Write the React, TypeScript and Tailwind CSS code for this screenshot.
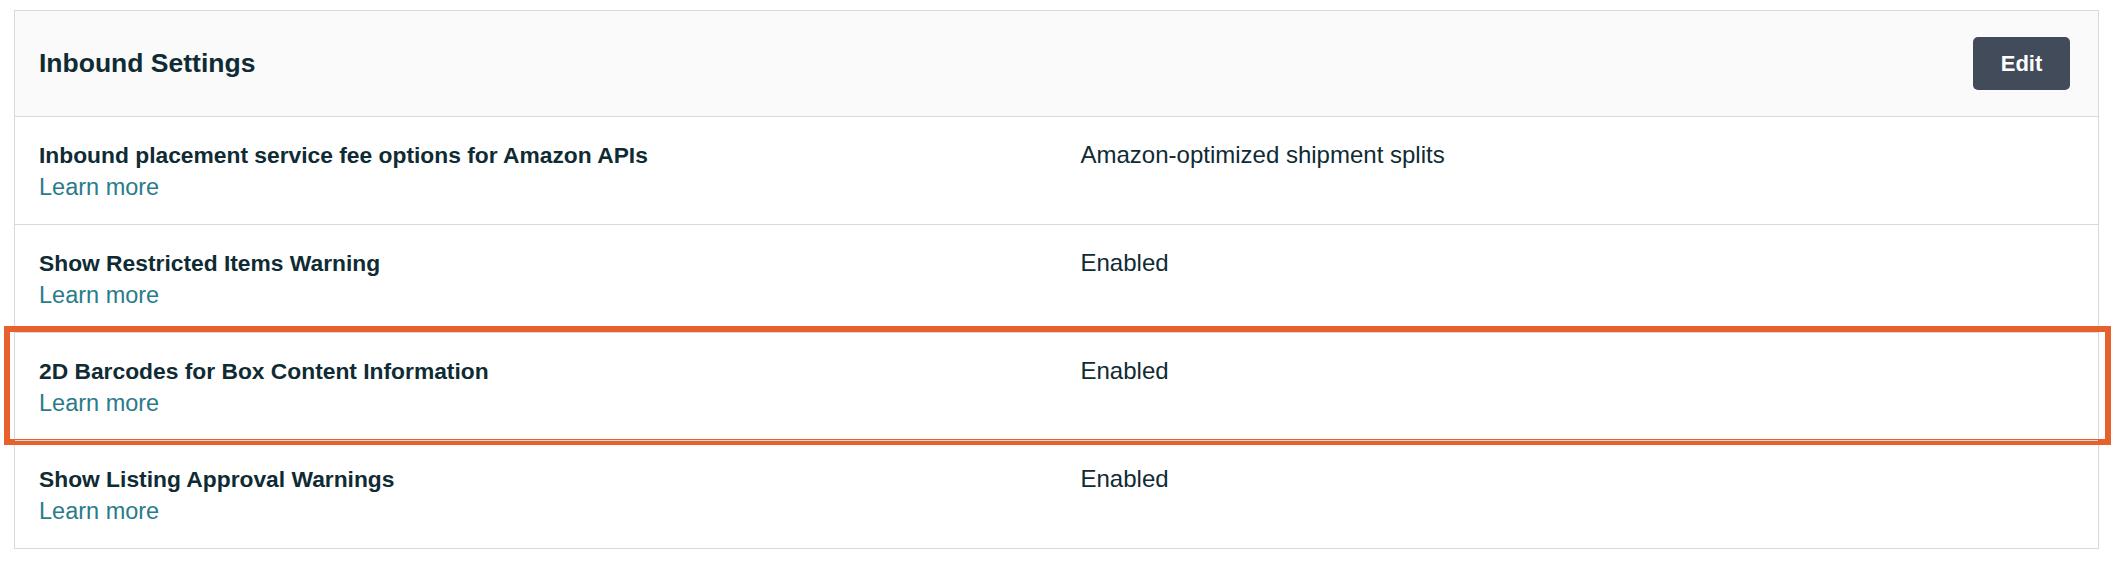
import React from "react";

const rows = [
  { title: "Inbound placement service fee options for Amazon APIs", value: "Amazon-optimized shipment splits" },
  { title: "Show Restricted Items Warning", value: "Enabled" },
  { title: "2D Barcodes for Box Content Information", value: "Enabled", highlight: true },
  { title: "Show Listing Approval Warnings", value: "Enabled" },
];

export default function App() {
  return (
    <div
      className="w-[2116px] h-[562px] bg-white pt-[10px] pl-[14px]"
      style={{ fontFamily: '"Liberation Sans", Arial, sans-serif' }}
    >
      <div className="w-[2085px] border border-[#d5dbdb] bg-white">
        <div className="h-[105px] bg-[#fafafa] flex items-center justify-between pl-[24px] pr-[28px]">
          <h2 className="text-[26.5px] font-bold text-[#0f2b33] leading-none">Inbound Settings</h2>
          <button className="w-[97px] h-[53px] rounded-[5px] bg-[#424b5a] text-white text-[22px] font-bold leading-none">
            Edit
          </button>
        </div>
        {rows.map((r, i) => (
          <div
            key={i}
            className="relative grid grid-cols-2 border-t border-[#d5dbdb] pt-[22px] pb-[21px]"
          >
            <div className="px-[24px]">
              <div className="text-[22.8px] leading-[32px] font-bold text-[#0f2b33]">{r.title}</div>
              <a className="block text-[23.5px] leading-[32px] text-[#2a7b8b] cursor-pointer">Learn more</a>
            </div>
            <div className="px-[24px]">
              <div className="text-[24px] leading-[32px] text-[#0f2b33]">{r.value}</div>
            </div>
            {r.highlight && (
              <div className="absolute top-[-7px] bottom-[-5px] left-[-11px] right-[-13px] border-[6px] border-[#e6612c] pointer-events-none" />
            )}
          </div>
        ))}
      </div>
    </div>
  );
}
